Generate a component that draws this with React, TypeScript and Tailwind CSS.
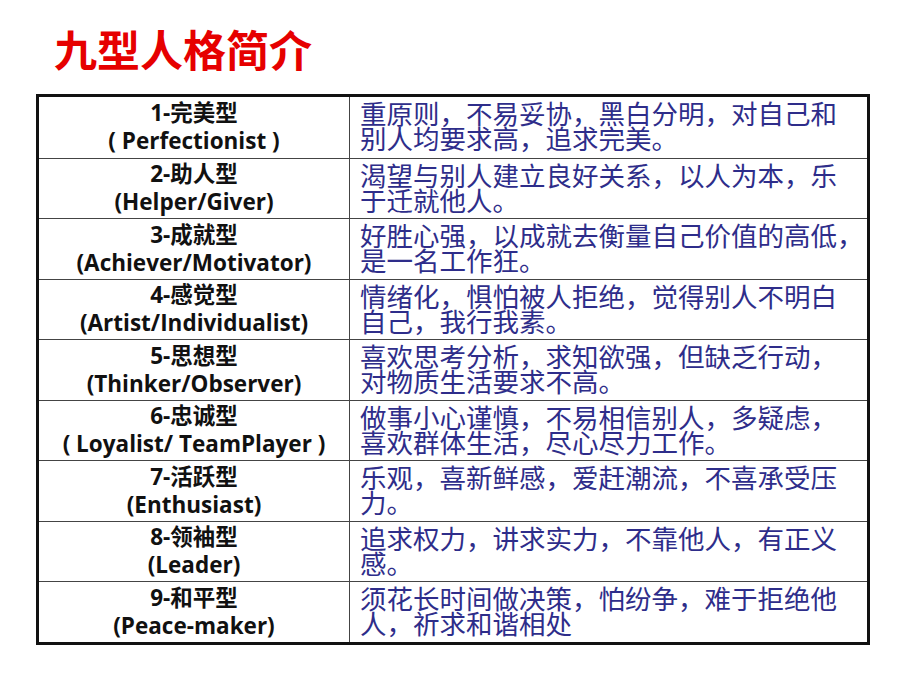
import React from 'react';

type TypeRow = {
    name: string;
    en: string;
    desc: string[];
};

const rows: TypeRow[] = [
    { name: '1-完美型', en: '( Perfectionist )', desc: ['重原则，不易妥协，黑白分明，对自己和', '别人均要求高，追求完美。'] },
    { name: '2-助人型', en: '(Helper/Giver)', desc: ['渴望与别人建立良好关系，以人为本，乐', '于迁就他人。'] },
    { name: '3-成就型', en: '(Achiever/Motivator)', desc: ['好胜心强，以成就去衡量自己价值的高低，', '是一名工作狂。'] },
    { name: '4-感觉型', en: '(Artist/Individualist)', desc: ['情绪化，惧怕被人拒绝，觉得别人不明白', '自己，我行我素。'] },
    { name: '5-思想型', en: '(Thinker/Observer)', desc: ['喜欢思考分析，求知欲强，但缺乏行动，', '对物质生活要求不高。'] },
    { name: '6-忠诚型', en: '( Loyalist/ TeamPlayer )', desc: ['做事小心谨慎，不易相信别人，多疑虑，', '喜欢群体生活，尽心尽力工作。'] },
    { name: '7-活跃型', en: '(Enthusiast)', desc: ['乐观，喜新鲜感，爱赶潮流，不喜承受压', '力。'] },
    { name: '8-领袖型', en: '(Leader)', desc: ['追求权力，讲求实力，不靠他人，有正义', '感。'] },
    { name: '9-和平型', en: '(Peace-maker)', desc: ['须花长时间做决策，怕纷争，难于拒绝他', '人，祈求和谐相处'] },
];

export default function App() {
    return (
        <div className="w-[911px] h-[675px] bg-white overflow-hidden">
            <h1 className="pl-[54px] pt-[21px] h-[94px] text-[43px] leading-[54px] font-bold text-[#e60000] font-['Noto_Sans_CJK_SC',sans-serif]">
                九型人格简介
            </h1>
            <div className="ml-[36px] w-[834px] border-[3px] border-[#111]">
                {rows.map((row, i) => (
                    <div
                        key={row.name}
                        className={`flex h-[60.5px] ${i > 0 ? 'border-t border-[#444]' : ''}`}
                    >
                        <div className="w-[311px] shrink-0 border-r border-[#444] flex flex-col items-center justify-center text-[22.5px] leading-[28px] font-bold text-[#111] font-['Open_Sans','Noto_Sans_CJK_SC',sans-serif]">
                            <div>{row.name}</div>
                            <div className="whitespace-pre">{row.en}</div>
                        </div>
                        <div className="flex-1 pl-[10px] pt-[3px] text-[26.5px] leading-[25px] text-[#2e2d8a] whitespace-nowrap font-['Noto_Sans_CJK_SC',sans-serif]">
                            {row.desc[0]}
                            <br />
                            {row.desc[1]}
                        </div>
                    </div>
                ))}
            </div>
        </div>
    );
}
